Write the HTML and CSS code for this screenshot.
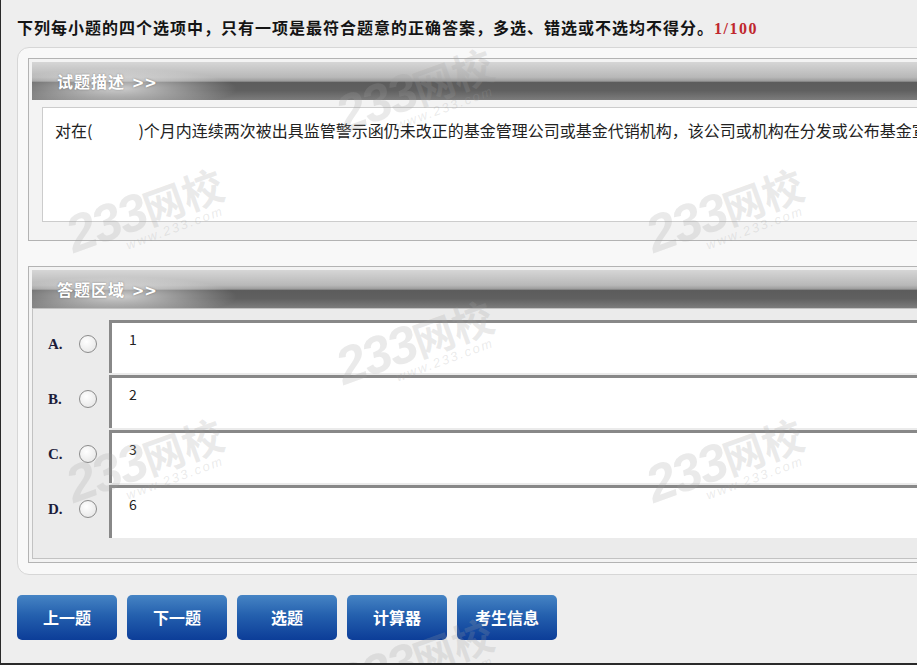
FILE: index.html
```html
<!DOCTYPE html>
<html>
  <head>
    <meta charset="utf-8" />
    <title>考试答题</title>
    <link rel="stylesheet" href="styles.css">
  </head>
  <body>
    <div id="frame">
      <div id="tip">下列每小题的四个选项中，只有一项是最符合题意的正确答案，多选、错选或不选均不得分。<span class="count">1/100</span></div>
      <div id="panel">
        <div class="section">
          <div class="bar">试题描述 <span class="arrow">&gt;&gt;</span></div>
          <div class="stem">对在(<span class="blank"></span>)个月内连续两次被出具监管警示函仍未改正的基金管理公司或基金代销机构，该公司或机构在分发或公布基金宣传推介材料前，应报送中国证监会及其派出机构。</div>
        </div>
        <div class="section">
          <div class="bar">答题区域 <span class="arrow">&gt;&gt;</span></div>
          <div class="options">
            <div class="option">
              <span class="letter">A.</span>
              <span class="radio"></span>
              <div class="choice">1</div>
            </div>
            <div class="option">
              <span class="letter">B.</span>
              <span class="radio"></span>
              <div class="choice">2</div>
            </div>
            <div class="option">
              <span class="letter">C.</span>
              <span class="radio"></span>
              <div class="choice">3</div>
            </div>
            <div class="option">
              <span class="letter">D.</span>
              <span class="radio"></span>
              <div class="choice">6</div>
            </div>
          </div>
        </div>
      </div>
      <div id="buttons">
        <button>上一题</button>
        <button>下一题</button>
        <button>选题</button>
        <button>计算器</button>
        <button>考生信息</button>
      </div>

      <!-- watermark -->
      <div class="mark" style="left:328px;top:92px"><b>233</b><i>网校</i><small>www.233.com</small></div>
      <div class="mark" style="left:58px;top:212px"><b>233</b><i>网校</i><small>www.233.com</small></div>
      <div class="mark" style="left:638px;top:212px"><b>233</b><i>网校</i><small>www.233.com</small></div>
      <div class="mark" style="left:328px;top:344px"><b>233</b><i>网校</i><small>www.233.com</small></div>
      <div class="mark" style="left:58px;top:462px"><b>233</b><i>网校</i><small>www.233.com</small></div>
      <div class="mark" style="left:638px;top:462px"><b>233</b><i>网校</i><small>www.233.com</small></div>
      <div class="mark" style="left:328px;top:662px"><b>233</b><i>网校</i><small>www.233.com</small></div>
    </div>
  </body>
</html>
```

FILE: styles.css
```css
html,
body {
  margin: 0;
  height: 100%;
  overflow: hidden;
  background-color: #eeeeee;
}
#frame {
  position: relative;
  height: 665px;
  box-sizing: border-box;
  border-left: 1px solid #2a2a2a;
  border-bottom: 2px solid #2a2a2a;
  overflow: hidden;
  background-color: #eeeeee;
  font-family: "Noto Sans CJK SC", sans-serif;
}
#tip {
  height: 20px;
  padding: 17px 0 0 16px;
  font-size: 16px;
  line-height: 20px;
  font-weight: bold;
  letter-spacing: 1px;
  color: #141414;
  white-space: nowrap;
}
.count {
  color: #c0272d;
  font-family: "Liberation Serif", serif;
  letter-spacing: 1.5px;
}
#panel {
  margin: 10px 0 0 16px;
  width: 1100px;
  border: 1px solid #d6d6d6;
  border-radius: 12px;
  background-color: #f8f8f8;
  padding: 10px 10px 11px;
}
.section {
  border: 1px solid #b3b3b3;
  padding: 3px;
  background-color: #f3f3f3;
}
.section + .section {
  margin-top: 25px;
}
.bar {
  height: 38px;
  line-height: 38px;
  padding-left: 25px;
  color: #fff;
  font-size: 16px;
  font-weight: bold;
  letter-spacing: 1px;
  text-shadow: 0 0 2px rgba(0, 0, 0, 0.35);
  background:
    radial-gradient(ellipse 120px 20px at 85px 70%, rgba(255, 255, 255, 0.7), rgba(255, 255, 255, 0)),
    linear-gradient(to bottom, #d6d6d6 0%, #b8b8b8 40%, #9c9c9c 50%, #5c5c5c 54%, #606060 75%, #7c7c7c 100%);
}
.arrow {
  margin-left: 2px;
  font-family: "DejaVu Sans", sans-serif;
  font-size: 15px;
  letter-spacing: 0;
}
.stem {
  margin: 7px 0 15px 10px;
  height: 115px;
  box-sizing: border-box;
  border: 1px solid #cccccc;
  background-color: #fff;
  padding: 11px 12px;
  font-size: 16px;
  line-height: 22px;
  color: #222;
  white-space: nowrap;
  overflow: hidden;
}
.blank {
  display: inline-block;
  width: 46px;
}
.options {
  border: 1px solid #c2c2c2;
  background-color: #ebebeb;
  padding: 11px 0 20px 15px;
}
.option {
  display: flex;
  align-items: flex-start;
  height: 53px;
  margin-bottom: 2px;
}
.option:last-child {
  margin-bottom: 0;
}
.letter {
  width: 31px;
  margin-top: 15px;
  line-height: 18px;
  font-family: "Liberation Serif", serif;
  font-size: 15px;
  font-weight: bold;
  color: #1c1c3a;
}
.radio {
  width: 18px;
  height: 18px;
  box-sizing: border-box;
  margin: 15px 12px 0 0;
  border: 1px solid #8c8c8c;
  border-radius: 50%;
  background: radial-gradient(circle at 40% 35%, #ffffff, #e2e2e2);
}
.choice {
  flex: 1;
  height: 53px;
  box-sizing: border-box;
  border-top: 3px solid #888;
  border-left: 3px solid #888;
  background-color: #fff;
  padding: 8px 17px;
  font-size: 14px;
  line-height: 16px;
  color: #222;
}
#buttons {
  display: flex;
  gap: 10px;
  margin: 20px 0 0 16px;
}
button {
  width: 100px;
  height: 45px;
  padding: 0 0 2px;
  border: 0;
  border-radius: 5px;
  background: linear-gradient(to bottom, #4684c4 0%, #2460ae 45%, #0c3d98 100%);
  color: #fff;
  font-family: "Noto Sans CJK SC", sans-serif;
  font-size: 16px;
  font-weight: bold;
  cursor: pointer;
}
.mark {
  position: absolute;
  transform: rotate(-20deg);
  transform-origin: left top;
  color: rgba(160, 160, 160, 0.22);
  pointer-events: none;
  white-space: nowrap;
  line-height: 1;
}
.mark b {
  font-family: "Liberation Sans", sans-serif;
  font-style: italic;
  font-size: 52px;
  letter-spacing: -2px;
}
.mark i {
  font-style: normal;
  font-weight: bold;
  font-size: 41px;
}
.mark small {
  display: block;
  margin: -4px 0 0 52px;
  font-family: "Liberation Sans", sans-serif;
  font-style: italic;
  font-size: 13px;
  letter-spacing: 2px;
}
```
